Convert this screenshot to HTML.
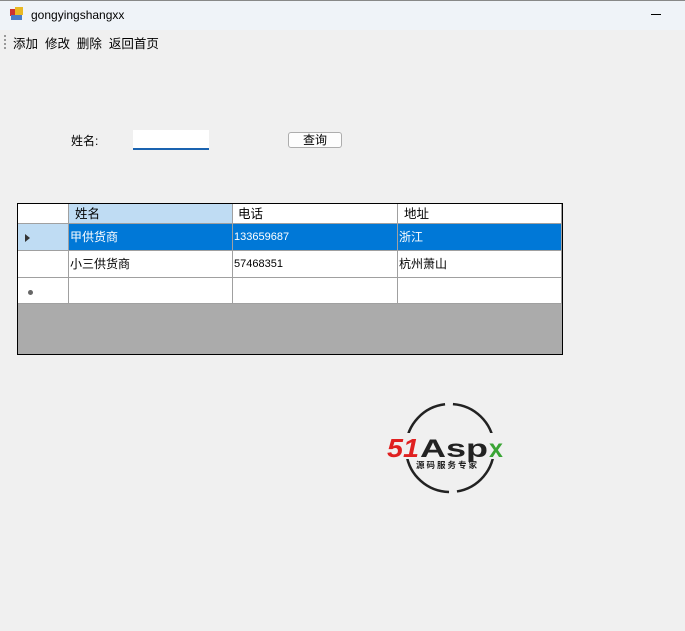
<!DOCTYPE html><html><head><meta charset="utf-8"><style>
*{margin:0;padding:0;box-sizing:border-box}
body{width:685px;height:631px;background:#f0f0f0;font-family:"Liberation Sans","Noto Sans CJK SC",sans-serif;font-size:12px;color:#000;position:relative;overflow:hidden}
.a{position:absolute}
.cell{position:absolute;white-space:nowrap;line-height:26px;padding-left:2px}
</style></head><body>
<div class="a" style="left:0;top:0;width:685px;height:30px;background:#eff3f8;border-top:1px solid #888"></div>
<div class="a" style="left:10px;top:9px;width:7px;height:7px;background:#c33"></div>
<div class="a" style="left:15px;top:7px;width:8px;height:8px;background:#e9b824"></div>
<div class="a" style="left:11px;top:15px;width:11px;height:5px;background:#4a7cc8"></div>
<div class="a" style="left:31px;top:8px;font-size:12px">gongyingshangxx</div>
<div class="a" style="left:651px;top:14px;width:10px;height:1px;background:#000"></div>
<div class="a" style="left:4px;top:35px;width:2px;height:14px;border-left:2px dotted #999"></div>
<div class="a" style="left:13px;top:33px;font-size:12.5px">添加&nbsp; 修改&nbsp; 删除&nbsp; 返回首页</div>
<div class="a" style="left:71px;top:132px">姓名:</div>
<div class="a" style="left:133px;top:130px;width:76px;height:20px;background:#fff;border-bottom:2px solid #1a63b0"></div>
<div class="a" style="left:288px;top:132px;width:54px;height:16px;background:#fdfdfd;border:1px solid #adadad;border-radius:3px;text-align:center;line-height:14px">查询</div>

<div class="a" style="left:17px;top:203px;width:546px;height:152px;border:1px solid #000;background:#ababab"></div>
<div class="a" style="left:18px;top:204px;width:544px;height:100px;background:#fff"></div>
<div class="a" style="left:68px;top:204px;width:164px;height:19px;background:#bfdcf3"></div>
<div class="a" style="left:18px;top:223px;width:50px;height:27px;background:#bfdcf3"></div>
<div class="a" style="left:68px;top:223px;width:494px;height:27px;background:#0078d7"></div>
<div class="a" style="left:68px;top:204px;width:1px;height:100px;background:#a0a0a0"></div>
<div class="a" style="left:232px;top:204px;width:1px;height:100px;background:#a0a0a0"></div>
<div class="a" style="left:397px;top:204px;width:1px;height:100px;background:#a0a0a0"></div>
<div class="a" style="left:561px;top:204px;width:1px;height:100px;background:#a0a0a0"></div>
<div class="a" style="left:18px;top:223px;width:544px;height:1px;background:#a0a0a0"></div>
<div class="a" style="left:18px;top:250px;width:544px;height:1px;background:#a0a0a0"></div>
<div class="a" style="left:18px;top:277px;width:544px;height:1px;background:#a0a0a0"></div>
<div class="a" style="left:18px;top:303px;width:544px;height:1px;background:#a0a0a0"></div>
<div class="cell" style="left:73px;top:204px;line-height:20px;font-size:12.5px">姓名</div>
<div class="cell" style="left:236px;top:204px;line-height:20px;font-size:12.5px">电话</div>
<div class="cell" style="left:402px;top:204px;line-height:20px;font-size:12.5px">地址</div>
<div class="a" style="left:25px;top:234px;width:0;height:0;border-left:5px solid #333;border-top:4px solid transparent;border-bottom:4px solid transparent"></div>
<div class="cell" style="left:68px;top:224px;color:#fff">甲供货商</div>
<div class="cell" style="left:232px;top:224px;color:#fff;font-size:11px">133659687</div>
<div class="cell" style="left:397px;top:224px;color:#fff">浙江</div>
<div class="cell" style="left:68px;top:251px">小三供货商</div>
<div class="cell" style="left:232px;top:251px;font-size:11px">57468351</div>
<div class="cell" style="left:397px;top:251px">杭州萧山</div>
<div class="a" style="left:28px;top:290px;width:5px;height:5px;border-radius:50%;background:#666"></div>

<svg class="a" style="left:380px;top:395px" width="140" height="105">
<circle cx="70" cy="53" r="44" fill="none" stroke="#222" stroke-width="2.5" stroke-dasharray="62 8"/>
<rect x="6" y="38" width="128" height="26" fill="#f0f0f0"/>
<text x="7" y="62" font-family="Liberation Sans" font-weight="bold" font-style="italic" font-size="26" fill="#e02020" textLength="32" lengthAdjust="spacingAndGlyphs">51</text>
<text x="40" y="62" font-family="Liberation Sans" font-weight="bold" font-size="25" fill="#222" textLength="68" lengthAdjust="spacingAndGlyphs">Asp</text>
<text x="109" y="62" font-family="Liberation Sans" font-weight="bold" font-size="25" fill="#3aa535">x</text>
<text x="36" y="73" font-family="Noto Sans CJK SC" font-size="8.5" font-weight="bold" fill="#222" letter-spacing="2">源码服务专家</text>
</svg>
</body></html>
